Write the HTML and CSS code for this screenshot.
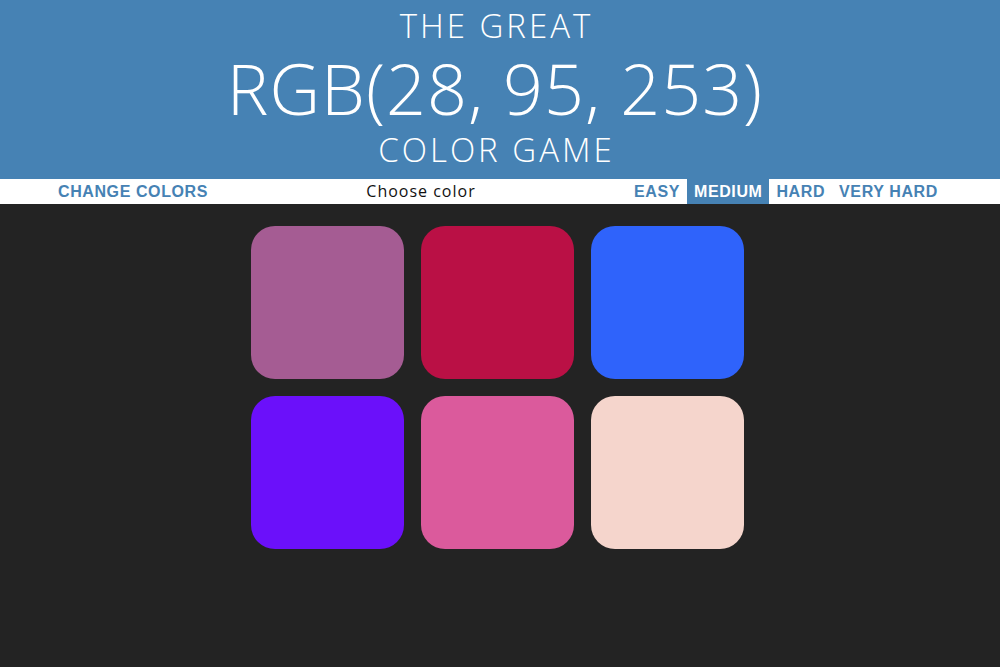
FILE: index.html
```html
<!DOCTYPE html>
<html lang="en">
<head>
<meta charset="utf-8">
<title>The Great RGB Color Game</title>
<link rel="stylesheet" href="styles.css">
</head>
<body>
<header class="header">
  <div class="title-small">THE GREAT</div>
  <div class="title-rgb">RGB(28, 95, 253)</div>
  <div class="title-small">COLOR GAME</div>
</header>
<nav class="stripe">
  <div class="stripe-left"><button class="btn">CHANGE COLORS</button></div>
  <div class="message">Choose color</div>
  <div class="modes">
    <button class="btn mode">EASY</button>
    <button class="btn mode selected">MEDIUM</button>
    <button class="btn mode">HARD</button>
    <button class="btn mode">VERY HARD</button>
  </div>
</nav>
<main class="board">
  <div class="square sq-1"></div>
  <div class="square sq-2"></div>
  <div class="square sq-3"></div>
  <div class="square sq-4"></div>
  <div class="square sq-5"></div>
  <div class="square sq-6"></div>
</main>
</body>
</html>
```
FILE: styles.css
```css
html, body {
  margin: 0;
  padding: 0;
}
body {
  background: #232323;
  font-family: "Open Sans", "Liberation Sans", sans-serif;
  height: 667px;
  overflow: hidden;
}
.header {
  background: #4682b4;
  color: #fff;
  text-align: center;
  height: 179px;
  display: flex;
  flex-direction: column;
  align-items: center;
  gap: 6px;
  padding: 8px 10px 0 0;
  box-sizing: border-box;
}
.title-small {
  font-size: 33px;
  font-weight: 300;
  line-height: 36px;
  letter-spacing: 3px;
  margin-right: -3px;
}
.title-rgb {
  font-size: 70px;
  font-weight: 300;
  line-height: 76px;
  letter-spacing: 1px;
}
.stripe {
  background: #fff;
  height: 25px;
  display: flex;
  align-items: stretch;
}
.stripe-left {
  width: 266px;
  display: flex;
  justify-content: center;
}
.btn {
  border: none;
  background: #fff;
  color: #4682b4;
  font-family: "Liberation Sans", Arial, sans-serif;
  font-weight: 700;
  font-size: 16px;
  letter-spacing: 0.6px;
  padding: 0;
  height: 100%;
  margin: 0;
}
.message {
  width: 310px;
  text-align: center;
  font-family: "Open Sans", "Liberation Sans", sans-serif;
  font-size: 16px;
  line-height: 25px;
  letter-spacing: 1px;
  color: #111;
}
.modes {
  display: flex;
  margin-left: 51px;
}
.mode {
  padding: 0 7px;
}
.mode.selected {
  background: #4682b4;
  color: #fff;
}
.board {
  display: grid;
  grid-template-columns: repeat(3, 153px);
  grid-auto-rows: 153px;
  gap: 17px;
  width: 493px;
  margin: 22px 0 0 251px;
}
.square {
  border-radius: 24px;
}
.sq-1 { background: #a55c93; }
.sq-2 { background: #ba1045; }
.sq-3 { background: #2f63fb; }
.sq-4 { background: #6b10fa; }
.sq-5 { background: #db5a9c; }
.sq-6 { background: #f5d5cc; }
```
